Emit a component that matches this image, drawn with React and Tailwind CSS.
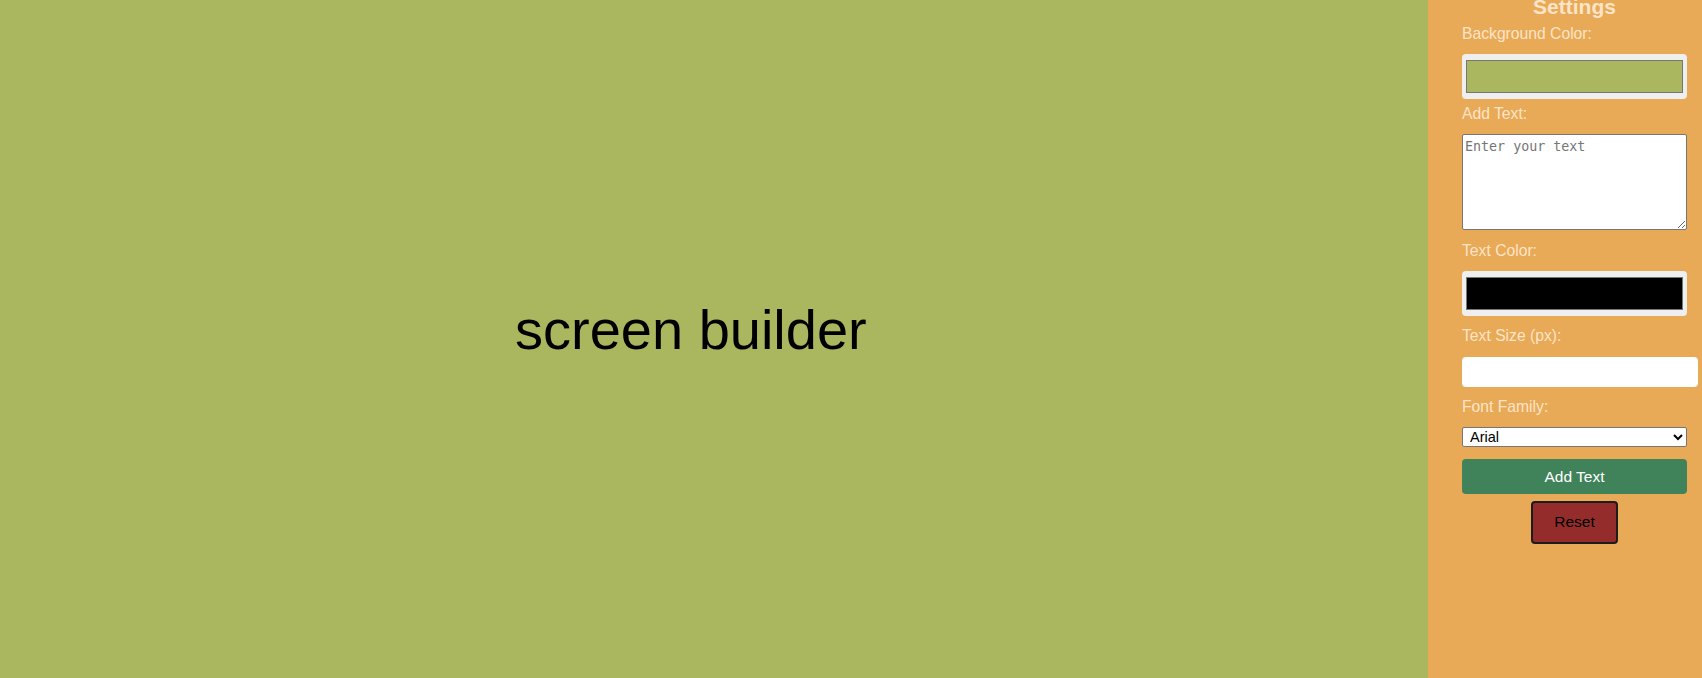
import React, { useState } from 'react';

const Label = ({ children, className = '' }) => (
  <label className={`block text-[15.7px] leading-[18px] text-[#fde4c8] ${className}`}>{children}</label>
);

const ColorBox = ({ color, className = '' }) => (
  <div className={`h-[45px] w-[225px] rounded-[4px] bg-[#efefef] px-[4px] py-[6px] ${className}`}>
    <div className="h-full w-full border border-[#767676]" style={{ backgroundColor: color }} />
  </div>
);

const App = () => {
  const [bgColor] = useState('#abb75f');
  const [textColor] = useState('#000000');

  return (
    <div className="flex h-[678px] w-full overflow-hidden font-['Liberation_Sans',Arial,sans-serif]">
      <div className="relative flex-1" style={{ backgroundColor: bgColor }}>
        <div className="absolute left-[515px] top-[298px] whitespace-nowrap text-[56px] leading-[64px] text-black">
          screen builder
        </div>
      </div>

      <aside className="w-[274px] shrink-0 bg-[#e8aa57] pl-[34px] pr-[15px]">
        <h2 className="mt-[-4px] w-[225px] text-center text-[21px] font-bold leading-[21px] text-[#fde4c8]">
          Settings
        </h2>

        <Label className="mt-[7.5px]">Background Color:</Label>
        <ColorBox color={bgColor} className="mt-[11.3px]" />

        <Label className="mt-[6.2px]">Add Text:</Label>
        <textarea
          placeholder="Enter your text"
          className="mt-[10.8px] block h-[96px] w-[225px] rounded-[2px] border border-[#767676] bg-white p-[2px] font-['DejaVu_Sans_Mono',monospace] text-[13.33px] text-black placeholder:text-[#757575]"
        />

        <Label className="mt-[12px]">Text Color:</Label>
        <ColorBox color={textColor} className="mt-[11.6px]" />

        <Label className="mt-[11px]">Text Size (px):</Label>
        <input
          type="number"
          className="mt-[11.3px] block h-[30px] w-[236px] rounded-[4px] bg-white px-2 text-[15px] outline-none"
        />

        <Label className="mt-[11px]">Font Family:</Label>
        <select className="mt-[11.6px] block h-[20px] w-[225px] rounded-[2px] border border-[#767676] bg-white pl-[3px] text-[14.5px] leading-[18px] text-black">
          <option>Arial</option>
          <option>Times New Roman</option>
          <option>Courier New</option>
        </select>

        <button className="mt-[11.7px] block h-[35px] w-[225px] rounded-[4px] bg-[#40825a] text-[15.5px] text-white">
          Add Text
        </button>
        <div className="flex w-[225px] justify-center">
          <button className="mt-[6.6px] h-[43px] w-[87px] rounded-[4px] border-2 border-[#1c1c1c] bg-[#952c2c] text-[15.5px] text-black">
            Reset
          </button>
        </div>
      </aside>
    </div>
  );
};

export default App;
